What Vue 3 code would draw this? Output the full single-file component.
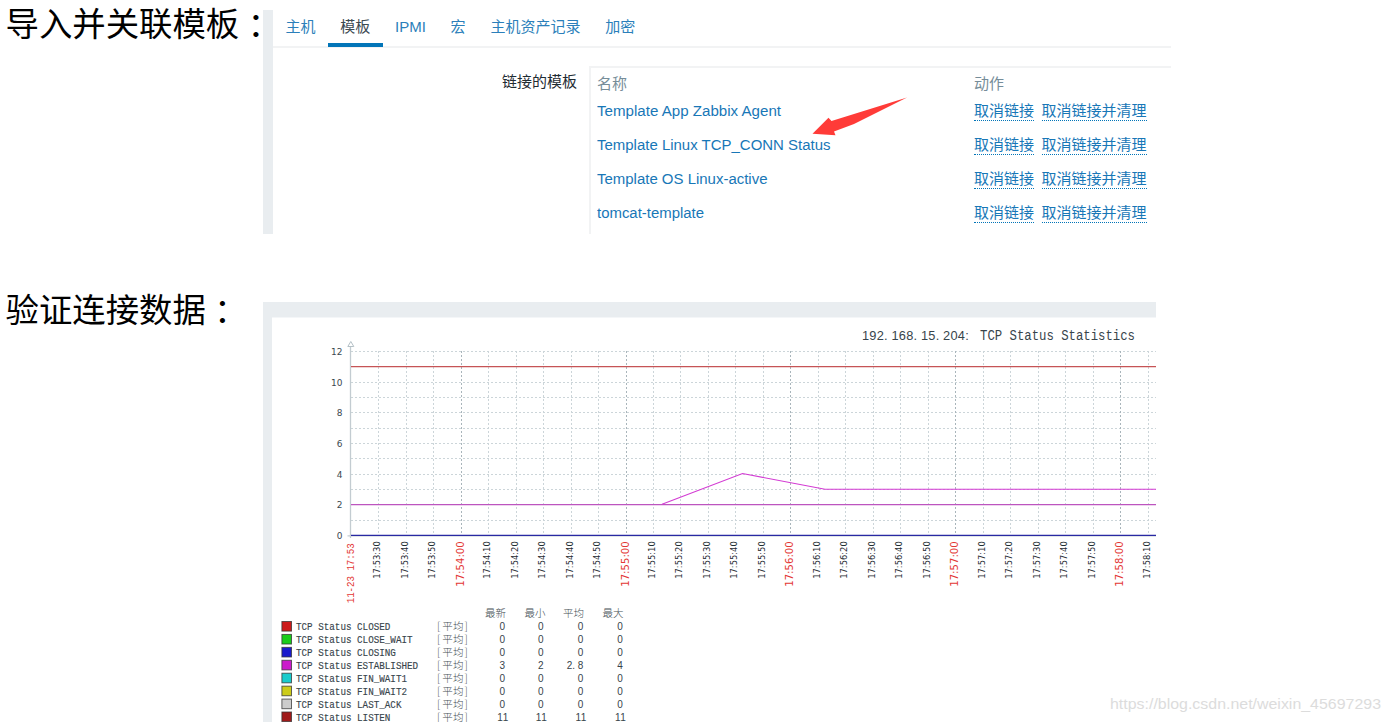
<script setup>
const tabs = ['主机', '模板', 'IPMI', '宏', '主机资产记录', '加密']
const templates = [
  { name: 'Template App Zabbix Agent', w: 184 },
  { name: 'Template Linux TCP_CONN Status', w: 233.5 },
  { name: 'Template OS Linux-active', w: 170.5 },
  { name: 'tomcat-template', w: 107 },
]

const rowY = (v) => Math.round(535 - v * 15.35) + 0.5
const rows = Array.from({ length: 12 }, (_, i) => rowY(i + 1))
const yLabels = [0, 2, 4, 6, 8, 10, 12]

const ticks = Array.from({ length: 29 }, (_, i) => {
  const sec = 30 + i * 10
  const m = 53 + Math.floor(sec / 60)
  const s = sec % 60
  return {
    x: Math.round(378.1 + i * 27.49) + 0.5,
    label: `17:${m}:${s === 0 ? '00' : s}`,
    major: s === 0,
  }
})

const legend = [
  ['CLOSED', '#cc1a1a', ['0', '0', '0', '0']],
  ['CLOSE_WAIT', '#1acc1a', ['0', '0', '0', '0']],
  ['CLOSING', '#1a1acc', ['0', '0', '0', '0']],
  ['ESTABLISHED', '#cc1acc', ['3', '2', '2.8', '4']],
  ['FIN_WAIT1', '#1acccc', ['0', '0', '0', '0']],
  ['FIN_WAIT2', '#cccc1a', ['0', '0', '0', '0']],
  ['LAST_ACK', '#cccccc', ['0', '0', '0', '0']],
  ['LISTEN', '#a01a1a', ['11', '11', '11', '11']],
].map(([name, color, values], i) => ({ name: 'TCP Status ' + name, color, values, y: 626.5 + i * 12.93 }))

const columns = [
  { label: '最新', x: 485, v: 499.5 },
  { label: '最小', x: 524.5, v: 538 },
  { label: '平均', x: 563, v: 577.7 },
  { label: '最大', x: 602.5, v: 617.2 },
]
const cell = 5.45
const valueX = (text, col) => {
  const start = text.length === 3 ? col.v - 2 * cell : text.length === 2 ? col.v - 2.3 : col.v
  return text.split('').map((_, i) => start + i * cell).join(' ')
}
const address = '192.168.15.204:'
const addressX = address.split('').map((_, i) => 862 + i * 7.37).join(' ')
</script>

<template>
  <main class="page">
    <section class="block first">
      <h2>导入并关联模板<span lang="zh-TW">：</span></h2>
      <div class="panel">
        <nav class="tabs">
          <a v-for="(t, i) in tabs" :key="t" :class="{ active: i === 1 }">{{ t }}</a>
        </nav>
        <div class="form">
          <div class="label">链接的模板</div>
          <div class="table">
            <div class="row head"><span>名称</span><span>动作</span></div>
            <div v-for="t in templates" :key="t.name" class="row">
              <svg class="name" width="300" height="22">
                <text x="0" y="16.3" :textLength="t.w" lengthAdjust="spacingAndGlyphs">{{ t.name }}</text>
              </svg>
              <span class="actions"><a>取消链接</a><a>取消链接并清理</a></span>
            </div>
          </div>
        </div>
        <svg class="arrow" width="96" height="40" viewBox="812 97 96 40">
          <path d="M812.5 133.8 L828.5 117.7 L831.5 121 L907 97.5 L854 124 L834 131.5 L835.5 135.2 Z" fill="#ff3b38" />
        </svg>
      </div>
    </section>

    <section class="block second">
      <h2>验证连接数据<span lang="zh-TW">：</span></h2>
      <svg class="chart" width="893" height="420" viewBox="263 302 893 420">
        <rect x="263" y="302" width="893" height="420" fill="#e9edf0" />
        <rect x="272" y="317.5" width="884" height="405" fill="#fff" />

        <text class="mono sans" :x="addressX" y="339.5">{{ address }}</text>
        <text class="mono title" x="980" y="339.5" textLength="155" lengthAdjust="spacingAndGlyphs">TCP Status Statistics</text>

        <g class="grid">
          <line v-for="y in rows" :key="y" x1="351" x2="1156" :y1="y" :y2="y" />
          <line v-for="t in ticks" :key="t.x" :x1="t.x" :x2="t.x" y1="351" y2="534" :class="{ major: t.major }" />
        </g>
        <path d="M350.5 347V538M347.5 535.8H1156" stroke="#c3ccd1" stroke-width="1.3" fill="none" />
        <path d="M347.8 346.5L350.8 341.5L353.8 346.5Z" fill="#fff" stroke="#b4c0c6" />

        <g fill="none">
          <path d="M351 366.6H1156" stroke="#c65456" stroke-width="1.3" />
          <path d="M351 504.6H1156" stroke="#bd55bf" stroke-width="1.4" />
          <path d="M662 504.3L742.5 473.5L825 489.2H1156" stroke="#d33bd3" stroke-width="1.1" />
          <path d="M351 535.4H1156" stroke="#2929a3" stroke-width="1.2" />
        </g>

        <text v-for="v in yLabels" :key="v" class="axis" x="342.5" :y="rowY(v) + 3" text-anchor="end">{{ v }}</text>
        <text v-for="t in ticks" :key="t.label" class="time" :class="{ major: t.major }" text-anchor="end"
          :textLength="t.major ? 45.5 : 37.5" lengthAdjust="spacingAndGlyphs"
          :transform="`translate(${t.x + (t.major ? 2.8 : 1.8)} 541.3) rotate(-90)`">{{ t.label }}</text>
        <text class="mono date" textLength="60" lengthAdjust="spacingAndGlyphs"
          transform="translate(354.3 603.3) rotate(-90)">11-23 17:53</text>

        <text v-for="c in columns" :key="c.label" class="kai" :x="c.x" y="617.3" textLength="21">{{ c.label }}</text>
        <g v-for="r in legend" :key="r.name">
          <rect x="281.9" :y="r.y - 5" width="9.6" height="9.6" :fill="r.color" stroke="#333" stroke-opacity=".75" stroke-width="1" />
          <text class="mono item" x="296" :y="r.y + 3.7" :textLength="r.name.length * 5.55" lengthAdjust="spacingAndGlyphs">{{ r.name }}</text>
          <text class="kai" :x="'437 442.3 453 464.5'" :y="r.y + 3.6">[平均]</text>
          <text v-for="(v, i) in r.values" :key="i" class="value" :x="valueX(v, columns[i])" :y="r.y + 3.8">{{ v }}</text>
        </g>
      </svg>
    </section>

    <svg class="watermark" width="280" height="26">
      <text x="1" y="18" textLength="271" lengthAdjust="spacingAndGlyphs">https://blog.csdn.net/weixin_45697293</text>
    </svg>
  </main>
</template>

<style>
body { background: #fff; overflow: hidden; }
</style>

<style scoped>
.page {
  position: relative;
  width: 1391px;
  height: 722px;
  overflow: hidden;
  background: #fff;
  font-family: "Liberation Sans", "Noto Sans CJK SC", sans-serif;
  color: #1f2c33;
}
.block { display: flex; align-items: flex-start; }
.first { height: 286px; }
.second { height: 436px; }
h2 {
  box-sizing: border-box;
  flex: none;
  width: 263px;
  height: 46px;
  margin: 0;
  padding-left: 5.5px;
  font: 400 33.4px/44px "Noto Sans CJK SC", sans-serif;
  color: #000;
  white-space: nowrap;
}
h2 span { display: inline-block; width: 24px; height: 44px; vertical-align: -2px; font-family: "Noto Sans CJK TC", sans-serif; }
.panel {
  position: relative;
  box-sizing: border-box;
  width: 908px;
  height: 224px;
  margin-top: 10px;
  border-left: 10px solid #e9edf0;
  font-size: 15px;
}
.tabs {
  display: flex;
  box-sizing: border-box;
  height: 38px;
  border-bottom: 2px solid #f2f3f4;
}
.tabs a {
  box-sizing: border-box;
  height: 37px;
  padding: 0 12.4px;
  line-height: 34px;
  color: #2b7fba;
}
.tabs a.active { border-bottom: 4px solid #0275b8; color: #3c4a52; }
.form { display: flex; padding-top: 18px; }
.label {
  width: 304px;
  margin-right: 12px;
  text-align: right;
  line-height: 31px;
}
.table {
  box-sizing: border-box;
  width: 582px;
  height: 168px;
  padding: 4px 0 0 6px;
  border-top: 2px solid #f2f3f4;
  border-left: 2px solid #f2f3f4;
}
.row {
  display: grid;
  grid-template-columns: 377px auto;
  align-items: center;
  height: 34px;
  line-height: 22px;
  color: #1877b7;
}
.head { height: 22px; padding-top: 1px; box-sizing: border-box; color: #768d99; }
.name { fill: #1877b7; display: block; font-size: 15.5px; }
.actions { display: flex; gap: 7.5px; padding-top: 1px; }
.actions a { height: 18px; line-height: 18px; border-bottom: 1px dotted #0275b8; }
.arrow { position: absolute; left: 539px; top: 87px; }
.chart { flex: none; margin-top: 16px; overflow: visible; }
.grid line { stroke: #ccd5d9; stroke-width: 1; stroke-dasharray: 2 2; }
.grid .major { stroke: #a9b5bb; }
.mono { font-family: "Liberation Mono", monospace; fill: #37444b; }
.title { font-size: 14px; }
.sans { font-family: "Liberation Sans", sans-serif; font-size: 12.8px; }
.date { font-size: 11px; fill: #e33734; }
.item { font-size: 11px; stroke: #37444b; stroke-width: .15px; }
.axis { font: 9px "DejaVu Sans", sans-serif; fill: #3c4950; }
.time { font: 9px "DejaVu Sans", sans-serif; fill: #1f2c33; }
.time.major { font-size: 11px; fill: #e33734; }
.kai { font: 300 10.5px "Noto Sans CJK SC", sans-serif; fill: #454f56; }
.value { font: 10px "Liberation Sans", sans-serif; fill: #37444b; }
.watermark { position: absolute; left: 1109px; top: 691px; font-size: 15.5px; fill: #dcdcdc; }
</style>
